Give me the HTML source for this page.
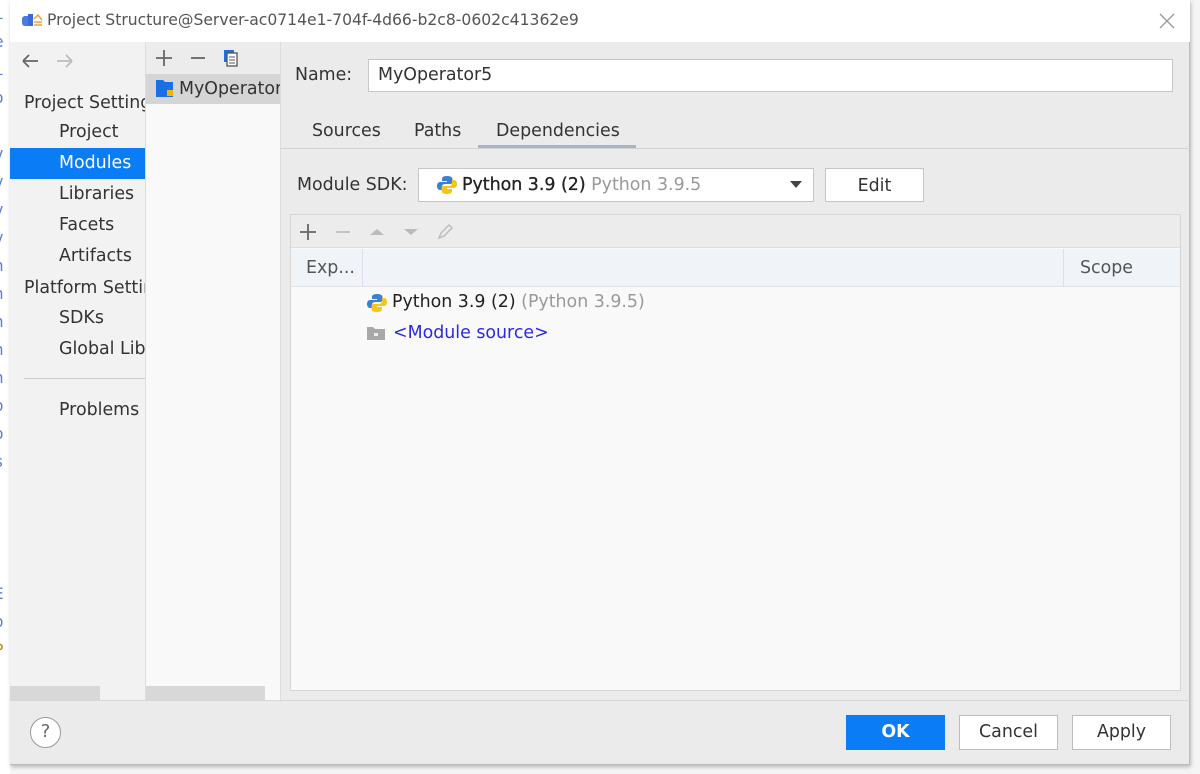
<!DOCTYPE html>
<html><head><meta charset="utf-8"><style>
*{box-sizing:border-box;margin:0;padding:0}
body{width:1200px;height:774px;background:#f5f5f5;font-family:"DejaVu Sans","Liberation Sans",sans-serif;font-size:17.4px;color:#333;position:relative;overflow:hidden}
.a{position:absolute}
.dlg{left:10px;top:0;width:1180px;height:765px;background:#ebebeb;border-right:1px solid #bbb;border-bottom:1px solid #bbb;box-shadow:1px 2px 4px rgba(0,0,0,.25)}
.bg{color:#5a7fd8;font-family:"DejaVu Sans Mono",monospace;font-size:16px}
</style></head><body>
<div class="a bg" style="left:0;top:0;width:10px;height:774px;background:#fff;overflow:hidden">
<div style="position:absolute;left:-6px;top:0;line-height:28px">i<br>e<br>i<br>o<br><br>v<br>v<br>v<br>v<br>n<br>n<br>n<br>n<br>n<br>o<br>o<br>s</div>
<div style="position:absolute;left:-6px;top:580px;line-height:28px">E<br>o<br><span style="color:#c09020">P</span></div>
</div>
<div class="a dlg">
 <div class="a" style="left:0;top:0;width:1180px;height:42px;background:#fff"></div>
 <svg class="a" style="left:11px;top:13px" width="22" height="14"><rect x="1" y="3" width="9" height="10" rx="3" fill="#4a7be0"/><rect x="7" y="1" width="5" height="12" fill="#3a6ad8"/><path d="M13 6l4-4 4 5M13 9h8M13 12h8" stroke="#e9a23b" stroke-width="1.5" fill="none"/></svg>
 <div class="a" style="left:37px;top:11px;font-size:15.6px;color:#555">Project Structure@Server-ac0714e1-704f-4d66-b2c8-0602c41362e9</div>
 <svg class="a" style="left:1148px;top:12px" width="18" height="18"><path d="M2 2l14 14M16 2L2 16" stroke="#999" stroke-width="1.3"/></svg>
 <div class="a" style="left:0;top:42px;width:135px;height:658px;background:#f2f2f2"></div>
 <svg class="a" style="left:10px;top:52px" width="60" height="18"><path d="M3 9h15M3 9l6-6M3 9l6 6" stroke="#666" stroke-width="1.8" fill="none"/><path d="M37 9h15M52 9l-6-6M52 9l-6 6" stroke="#bbb" stroke-width="1.8" fill="none"/></svg>
 <div class="a" style="left:14px;top:93px;width:121px;overflow:hidden;white-space:nowrap">Project Settings</div>
 <div class="a" style="left:49px;top:122px">Project</div>
 <div class="a" style="left:0;top:148px;width:135px;height:31px;background:#0a7cf5"></div>
 <div class="a" style="left:49px;top:153px;color:#fff">Modules</div>
 <div class="a" style="left:49px;top:184px">Libraries</div>
 <div class="a" style="left:49px;top:215px">Facets</div>
 <div class="a" style="left:49px;top:246px">Artifacts</div>
 <div class="a" style="left:14px;top:278px;width:121px;overflow:hidden;white-space:nowrap">Platform Settings</div>
 <div class="a" style="left:49px;top:308px">SDKs</div>
 <div class="a" style="left:49px;top:339px;width:86px;overflow:hidden;white-space:nowrap">Global Libraries</div>
 <div class="a" style="left:14px;top:378px;width:121px;height:1px;background:#ccc"></div>
 <div class="a" style="left:49px;top:400px">Problems</div>
 <div class="a" style="left:0;top:686px;width:90px;height:14px;background:#d8d8d8"></div>
 <div class="a" style="left:135px;top:42px;width:1px;height:658px;background:#ddd"></div>
 <div class="a" style="left:136px;top:42px;width:134px;height:658px;background:#f9f9f9"></div>
 <div class="a" style="left:136px;top:42px;width:134px;height:32px;background:#ececec"></div>
 <svg class="a" style="left:142px;top:47px" width="100" height="22"><path d="M4 11h16M12 3v16" stroke="#666" stroke-width="1.8"/><path d="M39 11h14" stroke="#666" stroke-width="1.8"/><rect x="72" y="3" width="10" height="12" fill="#1e6fe0"/><rect x="75" y="6" width="10" height="13" fill="#fff" stroke="#555" stroke-width="1.3"/><path d="M77 10h6M77 13h6M77 16h6" stroke="#555"/></svg>
 <div class="a" style="left:136px;top:74px;width:134px;height:30px;background:#d5d5d5"></div>
 <svg class="a" style="left:145px;top:78px" width="20" height="20"><path d="M1 2h7l2 2h8v15H1z" fill="#1a6fe6"/><rect x="12" y="12" width="6" height="6" fill="#f4b400"/></svg>
 <div class="a" style="left:169px;top:79px;width:101px;overflow:hidden;white-space:nowrap">MyOperator5</div>
 <div class="a" style="left:136px;top:686px;width:119px;height:14px;background:#d8d8d8"></div>
 <div class="a" style="left:270px;top:42px;width:1px;height:658px;background:#ddd"></div>
 <div class="a" style="left:285px;top:65px">Name:</div>
 <div class="a" style="left:358px;top:59px;width:805px;height:33px;background:#fff;border:1px solid #c6c6c6;padding:5px 9px">MyOperator5</div>
 <div class="a" style="left:302px;top:121px">Sources</div>
 <div class="a" style="left:404px;top:121px">Paths</div>
 <div class="a" style="left:486px;top:121px">Dependencies</div>
 <div class="a" style="left:468px;top:145px;width:158px;height:3px;background:#a8b4c8"></div>
 <div class="a" style="left:271px;top:148px;width:909px;height:1px;background:#d2d2d2"></div>
 <div class="a" style="left:287px;top:175px">Module SDK:</div>
 <div class="a" style="left:408px;top:168px;width:396px;height:34px;background:#fff;border:1px solid #c6c6c6"></div>
 <svg class="a" style="left:427px;top:175px" width="20" height="20"><path d="M10 1c-4 0-5 1.5-5 3v2h5v1H3c-2 0-3 2-3 4s1 4 3 4h2v-3c0-2 1.5-3 3-3h5c1.5 0 2.5-1 2.5-2.5V4c0-1.5-1.5-3-5.5-3z" fill="#3f7fd0"/><path d="M10 19c4 0 5-1.5 5-3v-2h-5v-1h7c2 0 3-2 3-4s-1-4-3-4h-2v3c0 2-1.5 3-3 3H7c-1.5 0-2.5 1-2.5 2.5V16c0 1.5 1.5 3 5.5 3z" fill="#f5c518"/></svg>
 <div class="a" style="left:452px;top:175px;white-space:nowrap"><span style="color:#222;-webkit-text-stroke:.3px #222">Python 3.9 (2)</span> <span style="color:#999">Python 3.9.5</span></div>
 <svg class="a" style="left:780px;top:181px" width="12" height="8"><path d="M0 0h12L6 7z" fill="#444"/></svg>
 <div class="a" style="left:815px;top:168px;width:99px;height:34px;background:#fff;border:1px solid #c6c6c6;text-align:center;line-height:34px">Edit</div>
 <div class="a" style="left:280px;top:214px;width:891px;height:477px;background:#f9f9f9;border:1px solid #d6d6d6"></div>
 <div class="a" style="left:281px;top:215px;width:889px;height:33px;background:#ececec;border-bottom:1px solid #ddd"></div>
 <svg class="a" style="left:286px;top:220px" width="170" height="24"><path d="M4 12h16M12 4v16" stroke="#666" stroke-width="1.8"/><path d="M40 12h14" stroke="#bbb" stroke-width="1.6"/><path d="M74 15l7-6 7 6z" fill="#bbb"/><path d="M108 9l7 6 7-6z" fill="#bbb"/><path d="M143 18l2-5 8-8 3 3-8 8z" stroke="#bbb" stroke-width="1.4" fill="none"/></svg>
 <div class="a" style="left:281px;top:249px;width:889px;height:38px;background:#f0f3f7;border-bottom:1px solid #e0e3e8"></div>
 <div class="a" style="left:352px;top:249px;width:1px;height:38px;background:#dde"></div>
 <div class="a" style="left:1053px;top:249px;width:1px;height:38px;background:#dde"></div>
 <div class="a" style="left:296px;top:258px;color:#555">Exp...</div>
 <div class="a" style="left:1070px;top:258px;color:#555">Scope</div>
 <svg class="a" style="left:357px;top:293px" width="20" height="20"><path d="M10 1c-4 0-5 1.5-5 3v2h5v1H3c-2 0-3 2-3 4s1 4 3 4h2v-3c0-2 1.5-3 3-3h5c1.5 0 2.5-1 2.5-2.5V4c0-1.5-1.5-3-5.5-3z" fill="#3f7fd0"/><path d="M10 19c4 0 5-1.5 5-3v-2h-5v-1h7c2 0 3-2 3-4s-1-4-3-4h-2v3c0 2-1.5 3-3 3H7c-1.5 0-2.5 1-2.5 2.5V16c0 1.5 1.5 3 5.5 3z" fill="#f5c518"/></svg>
 <div class="a" style="left:382px;top:292px;white-space:nowrap;color:#222">Python 3.9 (2) <span style="color:#999">(Python 3.9.5)</span></div>
 <svg class="a" style="left:357px;top:326px" width="18" height="15"><path d="M0 1h6l2 2h10v11H0z" fill="#a8a8a8"/><rect x="7" y="7" width="4" height="3" fill="#eee"/></svg>
 <div class="a" style="left:383px;top:323px;color:#2a2ae0">&lt;Module source&gt;</div>
 <div class="a" style="left:0;top:700px;width:1180px;height:1px;background:#d8d8d8"></div>
 <div class="a" style="left:20px;top:717px;width:31px;height:31px;border:1.5px solid #999;border-radius:50%;background:#fff;text-align:center;line-height:28px;color:#666;font-size:18px">?</div>
 <div class="a" style="left:836px;top:715px;width:99px;height:35px;background:#0a7cf5;color:#fff;text-align:center;line-height:35px;font-weight:bold">OK</div>
 <div class="a" style="left:949px;top:715px;width:99px;height:35px;background:#fff;border:1px solid #bdbdbd;text-align:center;line-height:33px">Cancel</div>
 <div class="a" style="left:1062px;top:715px;width:99px;height:35px;background:#fff;border:1px solid #bdbdbd;text-align:center;line-height:33px">Apply</div>
</div>
</body></html>
